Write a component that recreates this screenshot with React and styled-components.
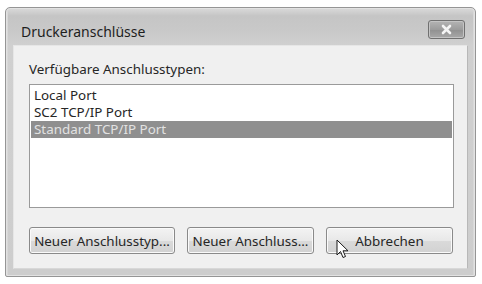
import React from 'react';
import styled, { createGlobalStyle } from 'styled-components';

const GlobalStyle = createGlobalStyle`
  html, body {
    margin: 0;
    padding: 0;
    background: #ffffff;
  }
  body {
    font-family: "Noto Sans", "Open Sans", "DejaVu Sans", sans-serif;
    color: #262626;
  }
`;

const Page = styled.div`
  width: 482px;
  height: 284px;
  padding: 7px 0 0 5px;
  box-sizing: border-box;
`;

const Window = styled.div`
  position: relative;
  width: 471px;
  height: 270px;
  box-sizing: border-box;
  border: 1px solid #959595;
  border-radius: 5px 5px 2px 2px;
  background: linear-gradient(to bottom, #dadada 0px, #c5c5c5 8px, #c9c9c9 24px, #d0d0d0 38px, #cdcdcd 100%);
  box-shadow: inset 0 0 0 1px #e2e2e2, inset 2px 0 0 #d8d8d8, inset -2px 0 0 #d8d8d8;
  display: flex;
  flex-direction: column;
  padding: 0 7px 8px 7px;
`;

const TitleBar = styled.div`
  height: 37px;
  display: flex;
  align-items: flex-start;
  justify-content: space-between;
  flex-shrink: 0;
`;

const Title = styled.div`
  font-size: 14px;
  line-height: 18px;
  padding: 15px 0 0 8px;
  color: #1e1e1e;
`;

const CloseButton = styled.div`
  margin: 12px 3px 0 0;
  width: 37px;
  height: 19px;
  box-sizing: border-box;
  border: 1px solid #707070;
  border-radius: 3px;
  background: linear-gradient(to bottom, #b4b4b4, #9c9c9c 50%, #909090 51%, #a8a8a8);
  box-shadow: inset 0 0 0 1px #c4c4c4;
  display: flex;
  align-items: center;
  justify-content: center;
`;

const Client = styled.div`
  flex: 1;
  background: #f0f0f0;
  border: 1px solid #e6e6e6;
  border-right-color: #b8b8b8;
  border-bottom-color: #d8d8d8;
  display: flex;
  flex-direction: column;
  padding: 15px 13px 14px 15px;
`;

const Label = styled.div`
  font-size: 13.4px;
  line-height: 17px;
  margin-bottom: 6px;
`;

const ListBox = styled.div`
  height: 124px;
  box-sizing: border-box;
  background: #ffffff;
  border: 1px solid #9a9a9a;
  padding: 2px 1px;
`;

const Item = styled.div`
  height: 17px;
  line-height: 17px;
  font-size: 13.4px;
  padding-left: 3px;
  white-space: nowrap;
  background: ${p => (p.selected ? '#8f8f8f' : 'transparent')};
  color: ${p => (p.selected ? '#e2e2e2' : '#262626')};
`;

const ButtonRow = styled.div`
  display: flex;
  margin-top: 19px;
  gap: 12px;
`;

const Button = styled.div`
  position: relative;
  width: ${p => p.w}px;
  height: 27px;
  box-sizing: border-box;
  border: 1px solid #8a8a8a;
  border-radius: 3px;
  background: linear-gradient(to bottom, #f3f3f3, #e8e8e8 50%, #dadada 51%, #d2d2d2);
  box-shadow: inset 0 0 0 1px #fafafa;
  font-size: 13.4px;
  white-space: nowrap;
  display: flex;
  align-items: center;
  justify-content: center;
  color: #262626;
`;

const Cursor = styled.svg`
  position: absolute;
  left: 9px;
  top: 11px;
`;

const App = () => (
  <Page>
    <GlobalStyle />
    <Window>
      <TitleBar>
        <Title>Druckeranschlüsse</Title>
        <CloseButton>
          <svg width="13" height="11" viewBox="0 0 13 11">
            <path d="M3 2 L10 9 M10 2 L3 9" stroke="#f4f4f4" strokeWidth="2.6" strokeLinecap="round" />
          </svg>
        </CloseButton>
      </TitleBar>
      <Client>
        <Label>Verfügbare Anschlusstypen:</Label>
        <ListBox>
          <Item>Local Port</Item>
          <Item>SC2 TCP/IP Port</Item>
          <Item selected>Standard TCP/IP Port</Item>
        </ListBox>
        <ButtonRow>
          <Button w={146}>Neuer Anschlusstyp...</Button>
          <Button w={127}>Neuer Anschluss...</Button>
          <Button w={127}>
            Abbrechen
            <Cursor width="14" height="22" viewBox="0 0 14 22">
              <path
                d="M1 1 L1 16 L4.5 12.5 L7 18.5 L9.5 17.5 L7 11.8 L12 11.8 Z"
                fill="#ffffff"
                stroke="#1a1a1a"
                strokeWidth="1"
                strokeLinejoin="round"
              />
            </Cursor>
          </Button>
        </ButtonRow>
      </Client>
    </Window>
  </Page>
);

export default App;
